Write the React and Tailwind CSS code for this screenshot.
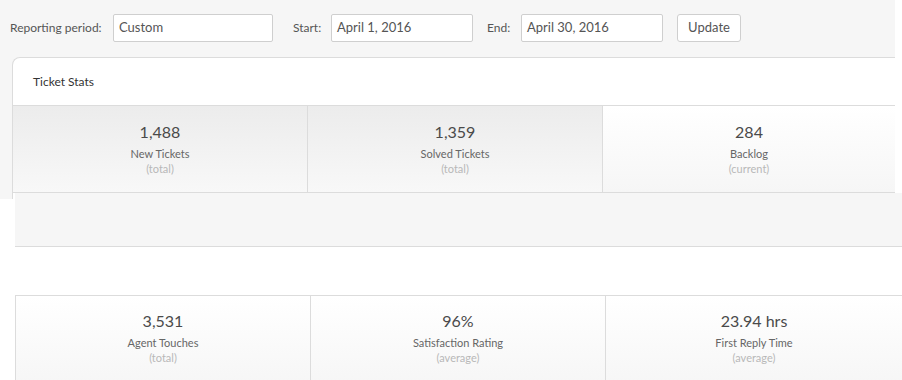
import React from 'react';

const font = { fontFamily: 'Lato, "Open Sans", "Liberation Sans", sans-serif' };

const Stat = ({ value, label, sub, tone, last }) => (
  <div
    className={`${last ? 'flex-1' : 'w-[295px] shrink-0 border-r border-[#dcdcdc]'} flex flex-col items-center ${tone}`}
  >
    <div className="text-[16px] leading-[20px] text-[#4a4a4a]">{value}</div>
    <div className="mt-[4px] text-[11px] leading-[15px] text-[#666]">{label}</div>
    <div className="text-[11px] leading-[15px] text-[#b8b8b8]">{sub}</div>
  </div>
);

const Field = ({ value, width }) => (
  <div
    className={`${width} h-[28px] flex items-center px-[5px] bg-white border border-[#cfcfcf] rounded-[2px] text-[13px] text-[#555]`}
  >
    {value}
  </div>
);

const gray = 'pt-[16px] bg-gradient-to-b from-[#ececec] to-[#f8f8f8]';
const light = 'pt-[16px] bg-gradient-to-b from-white to-[#f6f6f6]';
const lower = 'pt-[15px] bg-gradient-to-b from-white to-[#f6f6f6]';

export default function App() {
  return (
    <div className="w-[902px] h-[380px] overflow-hidden bg-white" style={font}>
      {/* first shot: filter bar + ticket stats card */}
      <div className="w-[895px] bg-[#f6f6f6]">
        <div className="flex items-center pt-[14px] pb-[15px] pl-[10px] text-[12px] text-[#555]">
          <span className="w-[103px]">Reporting period:</span>
          <Field value="Custom" width="w-[160px]" />
          <span className="ml-[20px] w-[38px]">Start:</span>
          <Field value="April 1, 2016" width="w-[142px]" />
          <span className="ml-[14px] w-[34px]">End:</span>
          <Field value="April 30, 2016" width="w-[142px]" />
          <button className="ml-[14px] w-[64px] h-[28px] bg-white border border-[#cfcfcf] rounded-[3px] text-[13px] text-[#555]">
            Update
          </button>
        </div>

        <div className="ml-[12px] bg-white border-t border-l border-[#dcdcdc] rounded-tl-[8px]">
          <div className="h-[48px] flex items-center pl-[20px] text-[12px] text-[#333] border-b border-[#dcdcdc]">
            Ticket Stats
          </div>
          <div className="flex h-[87px] border-b border-[#dcdcdc]">
            <Stat value="1,488" label="New Tickets" sub="(total)" tone={gray} />
            <Stat value="1,359" label="Solved Tickets" sub="(total)" tone={gray} />
            <Stat value="284" label="Backlog" sub="(current)" tone={light} last />
          </div>
        </div>
      </div>

      {/* second shot: gray band, blank header, agent stats */}
      <div className="flex">
        <div className="w-[15px] shrink-0">
          <div className="w-[13px] h-[6px] bg-[#f6f6f6] border-r border-[#dcdcdc]" />
        </div>
        <div className="flex-1">
          <div className="h-[54px] bg-[#f6f6f6] border-b border-[#dcdcdc]" />
          <div className="h-[49px] bg-white border-b border-[#dcdcdc] rounded-tr-[6px]" />
          <div className="flex h-[90px] border-l border-[#dcdcdc]">
            <Stat value="3,531" label="Agent Touches" sub="(total)" tone={lower} />
            <Stat value="96%" label="Satisfaction Rating" sub="(average)" tone={lower} />
            <Stat value="23.94 hrs" label="First Reply Time" sub="(average)" tone={lower} last />
          </div>
        </div>
      </div>
    </div>
  );
}
